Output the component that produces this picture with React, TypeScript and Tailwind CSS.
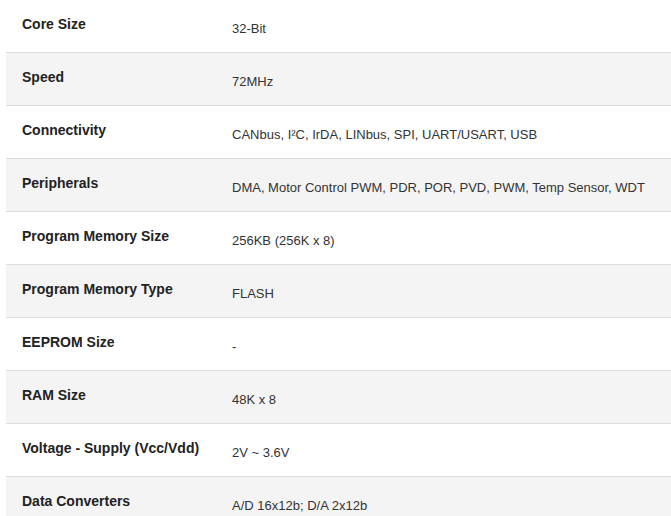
const SPECS: { label: string; value: string }[] = [
  { label: "Core Size", value: "32-Bit" },
  { label: "Speed", value: "72MHz" },
  { label: "Connectivity", value: "CANbus, I²C, IrDA, LINbus, SPI, UART/USART, USB" },
  { label: "Peripherals", value: "DMA, Motor Control PWM, PDR, POR, PVD, PWM, Temp Sensor, WDT" },
  { label: "Program Memory Size", value: "256KB (256K x 8)" },
  { label: "Program Memory Type", value: "FLASH" },
  { label: "EEPROM Size", value: "-" },
  { label: "RAM Size", value: "48K x 8" },
  { label: "Voltage - Supply (Vcc/Vdd)", value: "2V ~ 3.6V" },
  { label: "Data Converters", value: "A/D 16x12b; D/A 2x12b" },
];

export default function App() {
  return (
    <div className="min-h-screen bg-white pl-[6px] font-['Liberation_Sans',Arial,sans-serif]">
      <div className="flex flex-col">
        {SPECS.map((s, i) => (
          <div
            key={s.label}
            className={
              "grid h-[53px] grid-cols-[226px_1fr] border-b border-[#dddddd] " +
              (i % 2 === 1 ? "bg-[#f4f4f4]" : "bg-white")
            }
          >
            <div className="pl-4 pt-[14px] text-[14px] font-bold leading-5 text-[#222222]">
              {s.label}
            </div>
            <div className="pt-[19px] text-[13px] leading-5 text-[#333333]">{s.value}</div>
          </div>
        ))}
      </div>
    </div>
  );
}
